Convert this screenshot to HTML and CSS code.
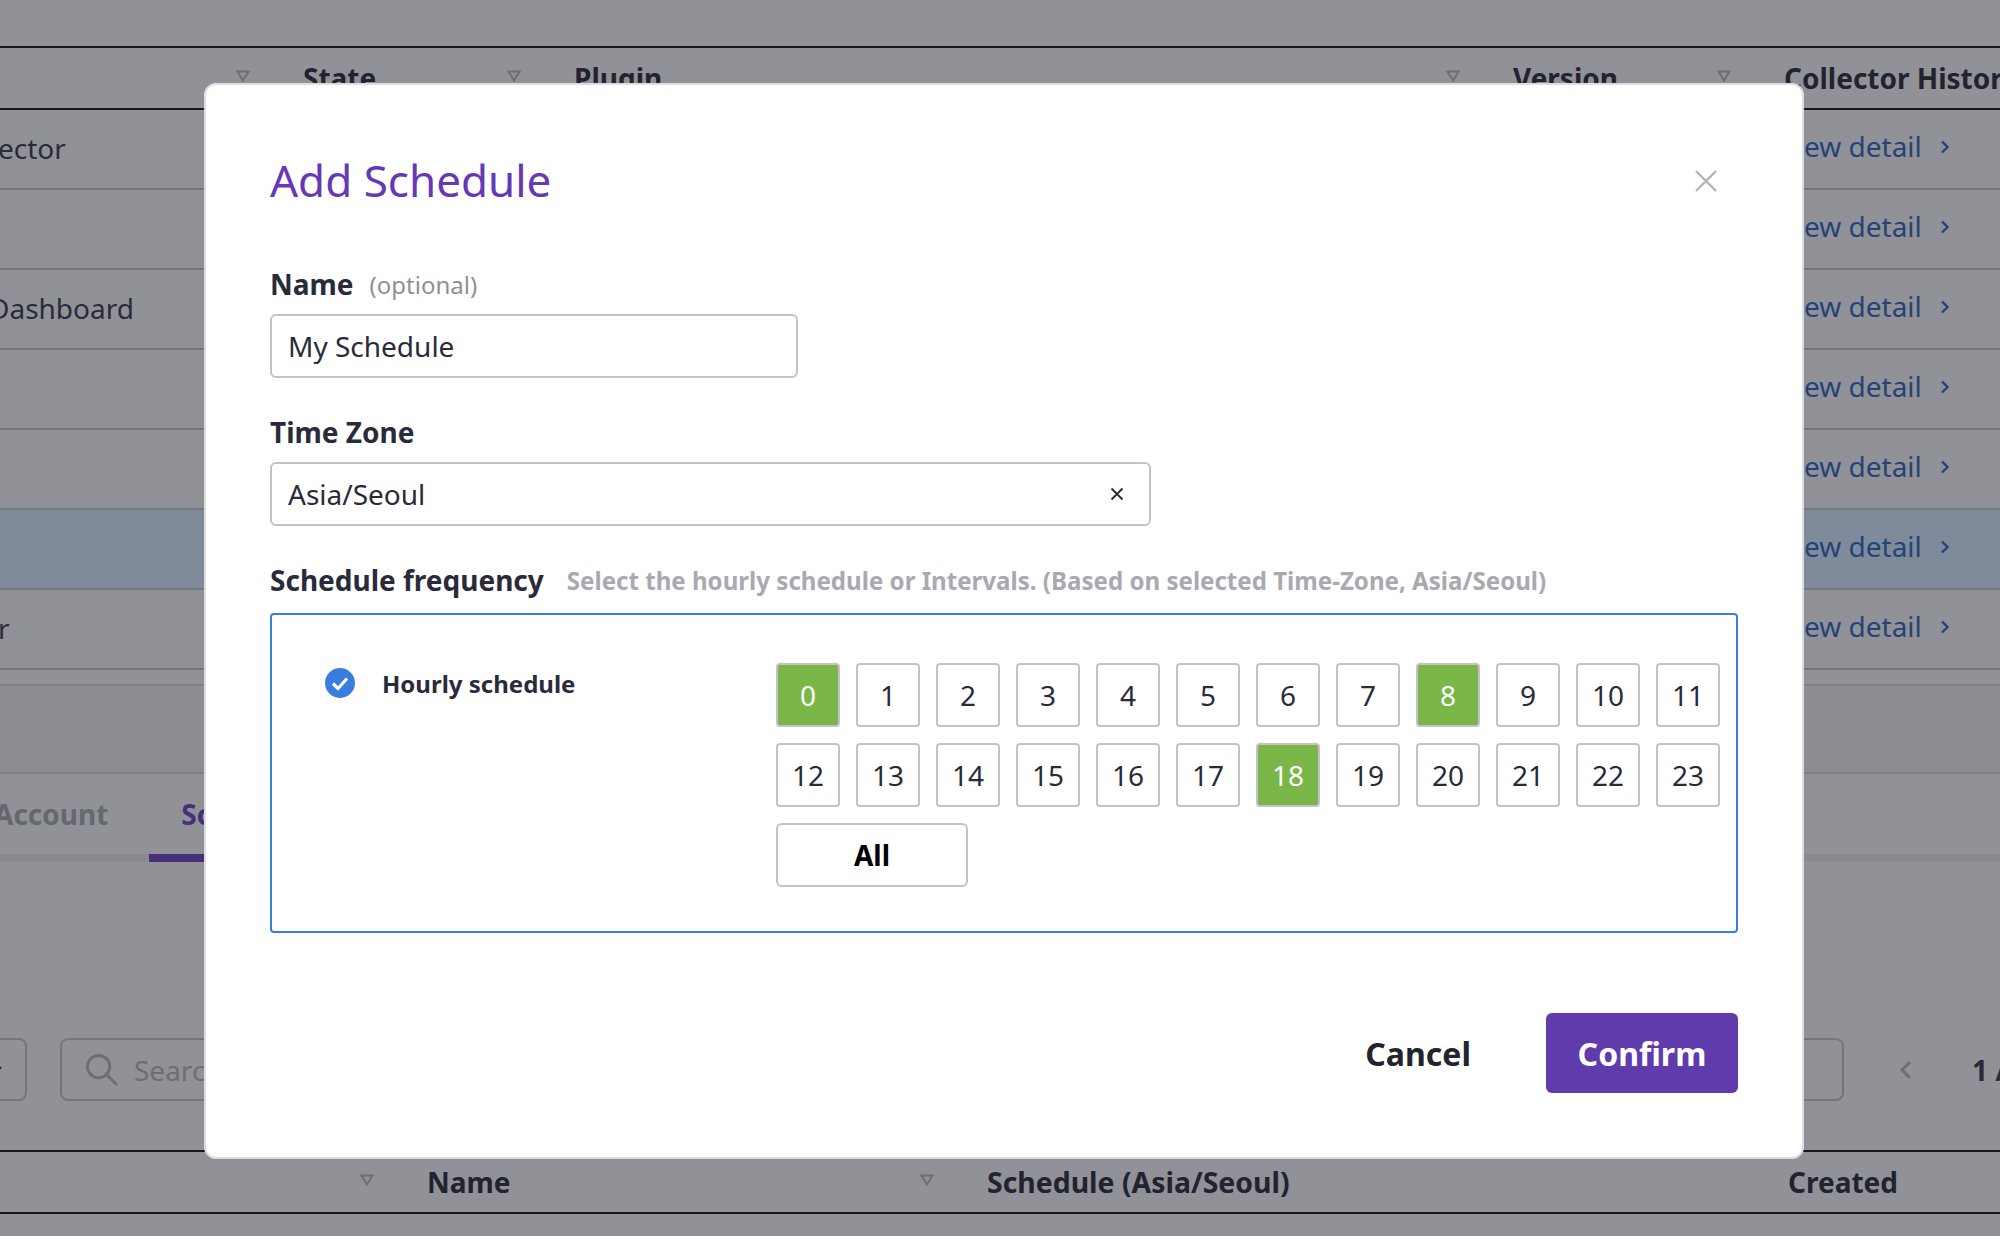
FILE: index.html
```html
<!DOCTYPE html>
<html lang="en">
<head>
    <meta charset="UTF-8">
    <link rel="stylesheet" href="styles.css">
    <title>Add Schedule</title>
</head>
<body>

    <div class="page">
        <div class="table-head collectors">
            <div class="head-cell"><span></span><svg class="sort" viewBox="0 0 14 12"><path d="M1.5 1.5h11L7 10.5z"/></svg></div>
            <div class="head-cell"><span>State</span><svg class="sort" viewBox="0 0 14 12"><path d="M1.5 1.5h11L7 10.5z"/></svg></div>
            <div class="head-cell"><span>Plugin</span><svg class="sort" viewBox="0 0 14 12"><path d="M1.5 1.5h11L7 10.5z"/></svg></div>
            <div class="head-cell"><span>Version</span><svg class="sort" viewBox="0 0 14 12"><path d="M1.5 1.5h11L7 10.5z"/></svg></div>
            <div class="head-cell"><span>Collector History</span></div>
        </div>

        <div class="row collectors"><span>ector</span><a class="detail">View detail<svg class="chevron" viewBox="0 0 9 16"><path d="M2 2.5L7.5 8 2 13.5"/></svg></a></div>
        <div class="row collectors"><span></span><a class="detail">View detail<svg class="chevron" viewBox="0 0 9 16"><path d="M2 2.5L7.5 8 2 13.5"/></svg></a></div>
        <div class="row collectors"><span class="shifted">Dashboard</span><a class="detail">View detail<svg class="chevron" viewBox="0 0 9 16"><path d="M2 2.5L7.5 8 2 13.5"/></svg></a></div>
        <div class="row collectors"><span></span><a class="detail">View detail<svg class="chevron" viewBox="0 0 9 16"><path d="M2 2.5L7.5 8 2 13.5"/></svg></a></div>
        <div class="row collectors"><span></span><a class="detail">View detail<svg class="chevron" viewBox="0 0 9 16"><path d="M2 2.5L7.5 8 2 13.5"/></svg></a></div>
        <div class="row collectors selected"><span></span><a class="detail">View detail<svg class="chevron" viewBox="0 0 9 16"><path d="M2 2.5L7.5 8 2 13.5"/></svg></a></div>
        <div class="row collectors"><span>r</span><a class="detail">View detail<svg class="chevron" viewBox="0 0 9 16"><path d="M2 2.5L7.5 8 2 13.5"/></svg></a></div>

        <div class="band"></div>

        <div class="tabs">
            <span class="tab">Account</span>
            <span class="tab active">Schedule</span>
        </div>

        <div class="toolbar">
            <div class="select-box"><svg class="caret" viewBox="0 0 14 10"><path d="M2 2l5 5 5-5"/></svg></div>
            <div class="search-box">
                <svg class="search-icon" viewBox="0 0 34 34"><circle cx="14" cy="14" r="11.5"/><path d="M22.5 22.5L33 33"/></svg>
                <span>Search</span>
            </div>
            <svg class="prev" viewBox="0 0 12 20"><path d="M10 2l-8 8 8 8"/></svg>
            <span class="pager">1 / 1</span>
        </div>

        <div class="table-head schedules">
            <div class="head-cell"><span></span><svg class="sort" viewBox="0 0 14 12"><path d="M1.5 1.5h11L7 10.5z"/></svg></div>
            <div class="head-cell"><span>Name</span><svg class="sort" viewBox="0 0 14 12"><path d="M1.5 1.5h11L7 10.5z"/></svg></div>
            <div class="head-cell"><span class="wide">Schedule (Asia/Seoul)</span></div>
            <div class="head-cell"><span>Created</span></div>
        </div>
    </div>

    <div class="modal">
        <div class="modal-head">
            <h2>Add Schedule</h2>
            <svg class="close" viewBox="0 0 22 22"><path d="M1 1l20 20M21 1L1 21"/></svg>
        </div>

        <div class="field-label first"><b>Name</b><span class="optional">(optional)</span></div>
        <div class="input name-input">My Schedule</div>

        <div class="field-label"><b>Time Zone</b></div>
        <div class="input zone-input">
            <span>Asia/Seoul</span>
            <svg class="clear" viewBox="0 0 14 14"><path d="M1.5 1.5l11 11M12.5 1.5l-11 11"/></svg>
        </div>

        <div class="field-label"><b>Schedule frequency</b><span class="hint">Select the hourly schedule or Intervals. (Based on selected Time-Zone, Asia/Seoul)</span></div>
        <div class="frequency">
            <div class="frequency-type">
                <svg class="check" viewBox="0 0 30 30"><circle cx="15" cy="15" r="15"/><path d="M8 15.5l5 5 9-10"/></svg>
                <b>Hourly schedule</b>
            </div>
            <div class="hours">
                <button class="hour on">0</button>
                <button class="hour">1</button>
                <button class="hour">2</button>
                <button class="hour">3</button>
                <button class="hour">4</button>
                <button class="hour">5</button>
                <button class="hour">6</button>
                <button class="hour">7</button>
                <button class="hour on">8</button>
                <button class="hour">9</button>
                <button class="hour">10</button>
                <button class="hour">11</button>
                <button class="hour">12</button>
                <button class="hour">13</button>
                <button class="hour">14</button>
                <button class="hour">15</button>
                <button class="hour">16</button>
                <button class="hour">17</button>
                <button class="hour on">18</button>
                <button class="hour">19</button>
                <button class="hour">20</button>
                <button class="hour">21</button>
                <button class="hour">22</button>
                <button class="hour">23</button>
                <button class="hour-all">All</button>
            </div>
        </div>

        <div class="modal-foot">
            <button class="cancel">Cancel</button>
            <button class="confirm">Confirm</button>
        </div>
    </div>

</body>
</html>
```

FILE: styles.css
```css
* {
    box-sizing: border-box;
}

html, body {
    margin: 0;
    height: 1236px;
    overflow: hidden;
}

body {
    position: relative;
    font-family: "Noto Sans", sans-serif;
    font-size: 28px;
    color: #2a2b3a;
    background-color: #919297;
}

.page {
    width: 2002px;
    margin-left: -2px;
    padding-top: 46px;
    white-space: nowrap;
}

svg {
    display: block;
    flex: none;
    fill: none;
}

/* background tables */
.table-head {
    display: grid;
    height: 64px;
    border-top: 2px solid #16171f;
    border-bottom: 2px solid #16171f;
    font-weight: 700;
    color: #22232f;
}

.collectors {
    grid-template-columns: 305px 271px 939px 271px 216px;
}

.schedules {
    grid-template-columns: 429px 560px 801px 212px;
    margin-top: 49px;
}

.head-cell {
    display: flex;
    justify-content: space-between;
    align-items: center;
    padding-right: 53px;
    overflow: hidden;
}

.wide {
    font-size: 28.4px;
}

.sort {
    width: 14px;
    height: 12px;
    margin-top: -5px;
    stroke: #6d6e76;
    stroke-width: 2;
}

.row {
    display: grid;
    height: 80px;
    padding-bottom: 2px;
    align-items: center;
    border-bottom: 2px solid #75767d;
}

.row.collectors {
    grid-template-columns: 1782px 220px;
}

.shifted {
    margin-left: -9px;
}

.selected {
    background-color: #7f8b9a;
}

.detail {
    display: flex;
    align-items: center;
    margin-bottom: 4px;
    color: #254377;
}

.chevron {
    width: 9px;
    height: 16px;
    margin: 2px 0 0 18px;
    stroke: #254377;
    stroke-width: 2.4;
}

.band {
    height: 90px;
    margin-top: 14px;
    background-color: #8c8d92;
    border-top: 2px solid #7e7f85;
    border-bottom: 2px solid #7e7f85;
}

.tabs {
    display: flex;
    height: 88px;
    border-bottom: 8px solid #8a8b90;
    font-weight: 700;
    color: #66676f;
}

.tab {
    margin-left: -4px;
    padding-top: 21px;
}

.tab.active {
    width: 300px;
    height: 88px;
    margin-left: 41px;
    padding-left: 32px;
    color: #46307a;
    border-bottom: 8px solid #46307a;
}

.toolbar {
    display: flex;
    align-items: center;
    height: 63px;
    margin-top: 176px;
}

.select-box {
    display: flex;
    flex: none;
    justify-content: flex-end;
    align-items: center;
    width: 29px;
    height: 63px;
    padding-right: 22px;
    border: 2px solid #75767d;
    border-left: 0;
    border-radius: 0 8px 8px 0;
}

.caret {
    width: 14px;
    height: 10px;
    stroke: #2a2b3a;
    stroke-width: 2.4;
}

.search-box {
    display: flex;
    flex: none;
    align-items: center;
    width: 1784px;
    height: 63px;
    margin-left: 33px;
    padding-left: 23px;
    border: 2px solid #75767d;
    border-radius: 8px;
    color: #6d6e75;
}

.search-box span {
    margin-left: 16px;
}

.search-icon {
    width: 33px;
    height: 33px;
    stroke: #6d6e75;
    stroke-width: 3;
}

.prev {
    width: 12px;
    height: 20px;
    margin-left: 56px;
    stroke: #6d6e75;
    stroke-width: 3;
}

.pager {
    flex: none;
    margin-left: 60px;
    font-weight: 700;
}

/* modal */
.modal {
    position: absolute;
    left: 204px;
    top: 83px;
    width: 1600px;
    height: 1076px;
    padding: 66px 64px 0;
    background-color: #fff;
    border: 2px solid #dedee1;
    border-radius: 12px;
}

.modal-head {
    display: flex;
    justify-content: space-between;
    align-items: center;
    height: 60px;
}

.modal-head h2 {
    margin: -3px 0 0;
    font-size: 44px;
    font-weight: 400;
    color: #6638b6;
}

.close {
    width: 22px;
    height: 22px;
    margin-right: 21px;
    stroke: #b3b3b8;
    stroke-width: 2.4;
}

.field-label {
    display: flex;
    align-items: center;
    height: 40px;
    margin: 34px 0 10px;
}

.field-label.first {
    margin-top: 53px;
}

.optional {
    margin-left: 16px;
    font-size: 24px;
    color: #8f8f99;
}

.hint {
    margin-left: 23px;
    font-size: 24.1px;
    font-weight: 700;
    color: #a9a9b1;
}

.input {
    display: flex;
    justify-content: space-between;
    align-items: center;
    height: 64px;
    padding: 0 25px 0 16px;
    border: 2px solid #c2c2c8;
    border-radius: 6px;
}

.name-input {
    width: 528px;
}

.zone-input {
    width: 881px;
}

.clear {
    width: 14px;
    height: 14px;
    stroke: #2d2e3a;
    stroke-width: 2;
}

.frequency {
    display: flex;
    height: 320px;
    margin-top: 13px;
    padding-top: 48px;
    border: 2px solid #3a7de0;
    border-radius: 4px;
}

.frequency-type {
    display: flex;
    align-items: center;
    width: 504px;
    height: 40px;
    padding-left: 53px;
    font-size: 24px;
}

.check {
    width: 30px;
    height: 30px;
    margin-right: 27px;
}

.check circle {
    fill: #3a7de0;
}

.check path {
    stroke: #fff;
    stroke-width: 3.2;
}

.hours {
    display: grid;
    grid-template-columns: repeat(12, 64px);
    grid-auto-rows: 64px;
    gap: 16px;
}

.hour, .hour-all {
    padding: 0;
    font-family: "Noto Sans", sans-serif;
    font-size: 28px;
    color: #2a2b3a;
    background-color: #fff;
    border: 2px solid #c2c2c8;
    border-radius: 4px;
}

.hour.on {
    color: #fff;
    background-color: #7ab648;
}

.hour-all {
    grid-column: 1 / -1;
    width: 192px;
    font-weight: 700;
    color: #000;
    border-radius: 6px;
}

.modal-foot {
    display: flex;
    justify-content: flex-end;
    align-items: center;
    gap: 75px;
    margin-top: 80px;
}

.cancel, .confirm {
    padding: 0;
    font-family: "Noto Sans", sans-serif;
    font-size: 32px;
    font-weight: 700;
    border: 0;
}

.cancel {
    color: #22232f;
    background: none;
}

.confirm {
    width: 192px;
    height: 80px;
    color: #fff;
    background-color: #603bab;
    border-radius: 6px;
}
```
